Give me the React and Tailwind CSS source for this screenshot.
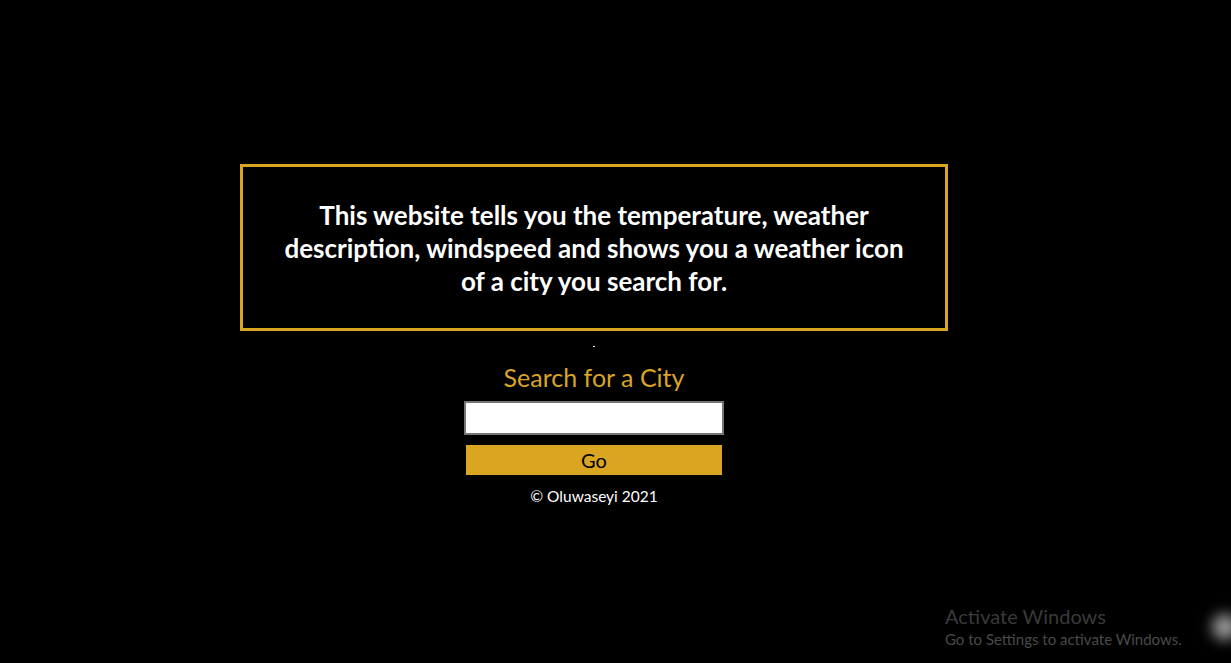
export default function App() {
  return (
    <div className="relative w-[1231px] h-[663px] bg-black overflow-hidden" style={{ fontFamily: '"Lato", "Open Sans", sans-serif' }}>
      <div className="w-[1188px] flex flex-col items-center pt-[164px]">
        <div className="w-[708px] h-[167px] border-[3px] border-[#daa520] flex items-center justify-center">
          <p className="text-white font-bold text-[26px] leading-[33px] text-center pt-[2px]">
            This website tells you the temperature, weather<br />
            description, windspeed and shows you a weather icon<br />
            of a city you search for.
          </p>
        </div>
        <div className="mt-[15px] w-[2px] h-[1px] bg-white" />
        <h2 className="mt-[15px] text-[#daa520] text-[25px] leading-[30px]">Search for a City</h2>
        <div className="mt-[9px] w-[260px] h-[34px] bg-white border-2 border-[#767676]" />
        <button className="mt-[10px] w-[256px] h-[30px] bg-[#daa520] text-black text-[20px] leading-[30px]">Go</button>
        <p className="mt-[10px] text-white text-[15.5px] leading-[22px]">© Oluwaseyi 2021</p>
      </div>
      <div className="absolute left-[945px] top-[604px] text-[#3a3a3a]">
        <div className="text-[20px] leading-[24px]">Activate Windows</div>
        <div className="text-[15px] leading-[22px] text-[#4a4a4a]">Go to Settings to activate Windows.</div>
      </div>
      <div className="absolute left-[1212px] top-[614px] w-[26px] h-[26px] rounded-full bg-[#999999] blur-[7px]" />
    </div>
  );
}
